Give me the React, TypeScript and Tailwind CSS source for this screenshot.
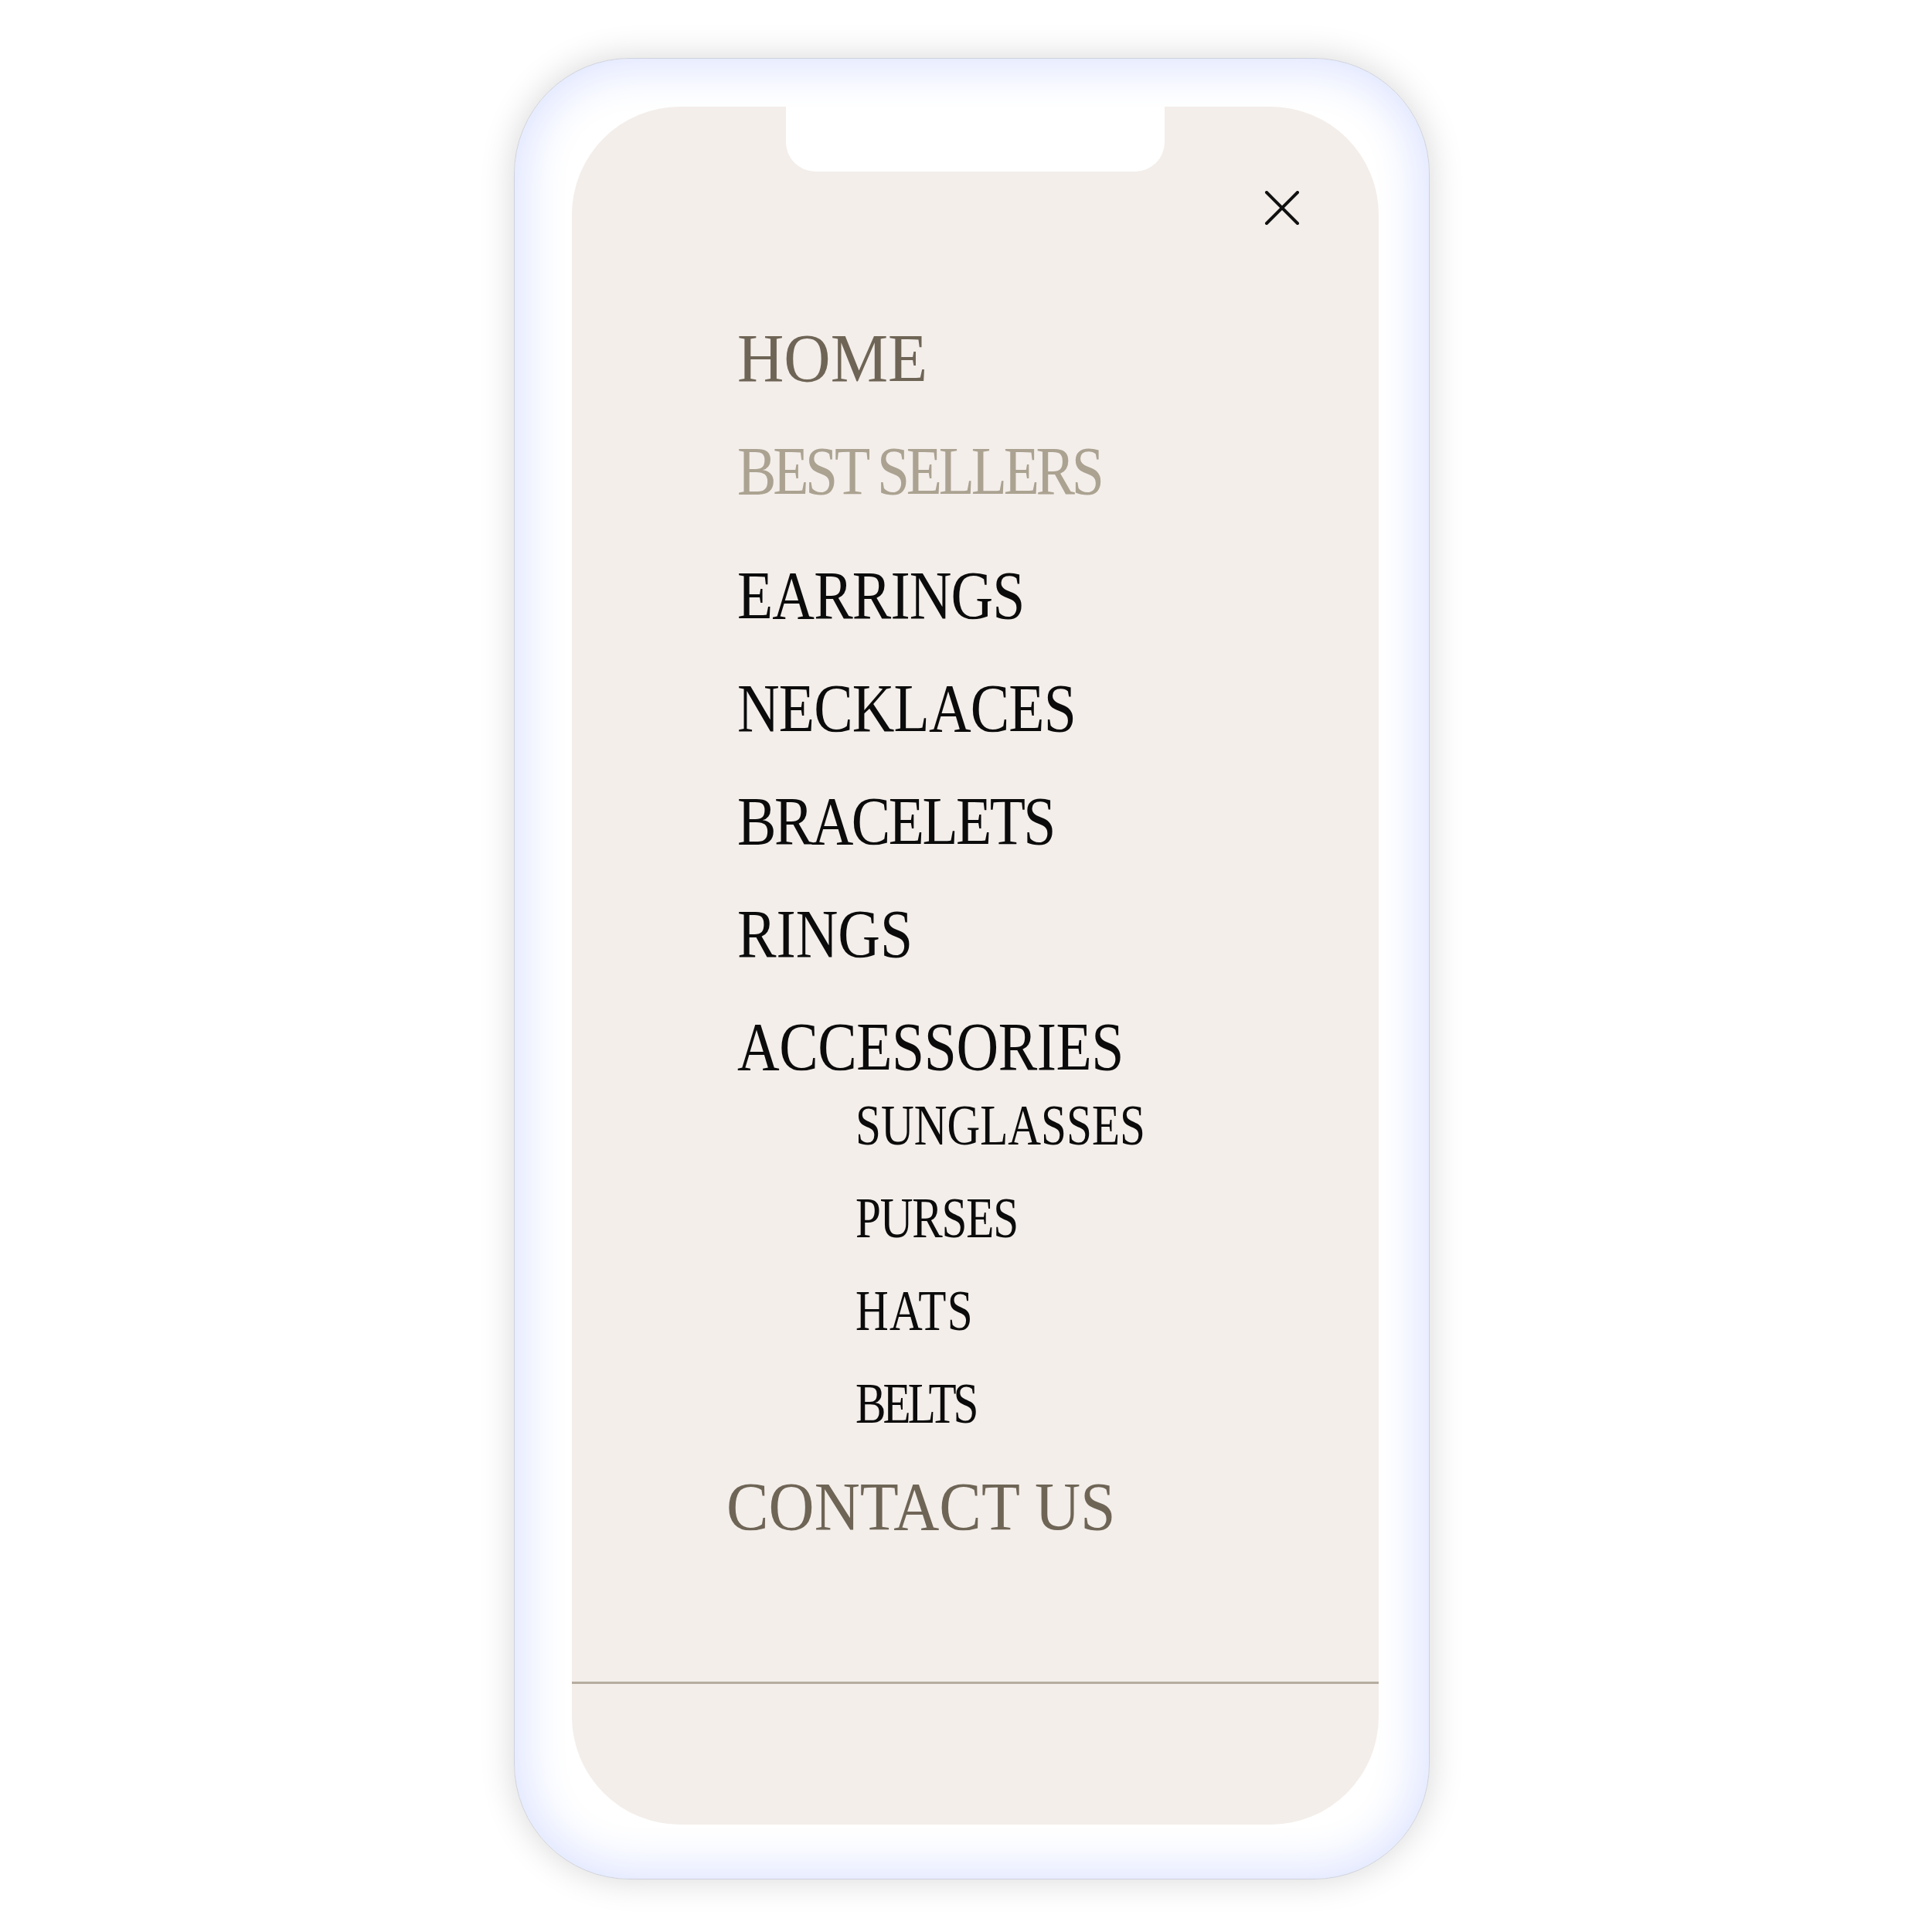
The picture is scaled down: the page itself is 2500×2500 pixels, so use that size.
import { useState } from 'react'

type Tone = 'dark' | 'muted' | 'light'
type Item = { label: string; tone: Tone; fit: string }

// each label is squeezed a little so the Times caps sit at the widths of the original face
const TOP: Item[] = [
  { label: 'HOME', tone: 'muted', fit: 'scale-x-[0.95] tracking-[0px]' },
  { label: 'BEST SELLERS', tone: 'light', fit: 'scale-x-[0.86] tracking-[-5px]' },
]

const MAIN: Item[] = [
  { label: 'EARRINGS', tone: 'dark', fit: 'scale-x-[0.86] tracking-[-1px]' },
  { label: 'NECKLACES', tone: 'dark', fit: 'scale-x-[0.86] tracking-[-1px]' },
  { label: 'BRACELETS', tone: 'dark', fit: 'scale-x-[0.86] tracking-[-3px]' },
  { label: 'RINGS', tone: 'dark', fit: 'scale-x-[0.86] tracking-[0px]' },
  { label: 'ACCESSORIES', tone: 'dark', fit: 'scale-x-[0.86] tracking-[-0.5px]' },
]

const SUB = [
  { label: 'SUNGLASSES', fit: 'tracking-[0px]' },
  { label: 'PURSES', fit: 'tracking-[-1.5px]' },
  { label: 'HATS', fit: 'tracking-[1.5px]' },
  { label: 'BELTS', fit: 'tracking-[-5px]' },
]

const toneClass: Record<Tone, string> = {
  dark: 'text-[#0b0b0b]',
  muted: 'text-[#6f6556]',
  light: 'text-[#aba291]',
}

function CloseIcon() {
  return (
    <svg width="46" height="44" viewBox="0 0 46 44" fill="none">
      <path d="M3 2 L43 42 M43 2 L3 42" stroke="#111111" strokeWidth="4" strokeLinecap="round" />
    </svg>
  )
}

function NavLink({ item }: { item: Item }) {
  return (
    <div className={`text-[88px] leading-[146px] whitespace-nowrap origin-left ${item.fit} ${toneClass[item.tone]}`}>
      {item.label}
    </div>
  )
}

export default function App() {
  const [open, setOpen] = useState(true)

  return (
    <div className="w-[2500px] h-[2500px] bg-white pl-[665px] pt-[75px] font-['Liberation_Serif',serif]">
      {/* phone frame */}
      <div className="w-[1185px] h-[2357px] rounded-[150px] bg-white border border-[#cfd2de] shadow-[0_0_45px_rgba(0,0,0,0.16),inset_0_0_60px_12px_#dce3ff] pl-[74px] pr-[65px] pt-[62px] pb-[70px]">
        <div className="relative w-full h-full overflow-hidden rounded-[140px] bg-[#f3eeea]">
          {/* notch */}
          <div className="absolute top-0 left-[277px] w-[490px] h-[84px] bg-white rounded-b-[38px]" />

          {/* header */}
          <div className="flex justify-end pt-[109px] pr-[102px]">
            <button onClick={() => setOpen(!open)} className="block">
              <CloseIcon />
            </button>
          </div>

          {/* menu */}
          <nav className="pl-[214px] mt-[100px]">
            {TOP.map((t) => (
              <NavLink key={t.label} item={t} />
            ))}

            <div className="mt-[15px]">
              {MAIN.map((m) => (
                <NavLink key={m.label} item={m} />
              ))}
              <div className="-mt-[32px] pl-[153px]">
                {SUB.map((s) => (
                  <div
                    key={s.label}
                    className={`text-[74px] leading-[120px] whitespace-nowrap scale-x-[0.8] origin-left ${s.fit} ${toneClass.dark}`}
                  >
                    {s.label}
                  </div>
                ))}
              </div>
            </div>

            <div className="-ml-[14px] mt-[1px]">
              <NavLink item={{ label: 'CONTACT US', tone: 'muted', fit: 'scale-x-[0.93] tracking-[0px]' }} />
            </div>
          </nav>

          {/* divider */}
          <div className="mt-[153px] h-[3px] bg-[#b6ad9f]" />
        </div>
      </div>
    </div>
  )
}
